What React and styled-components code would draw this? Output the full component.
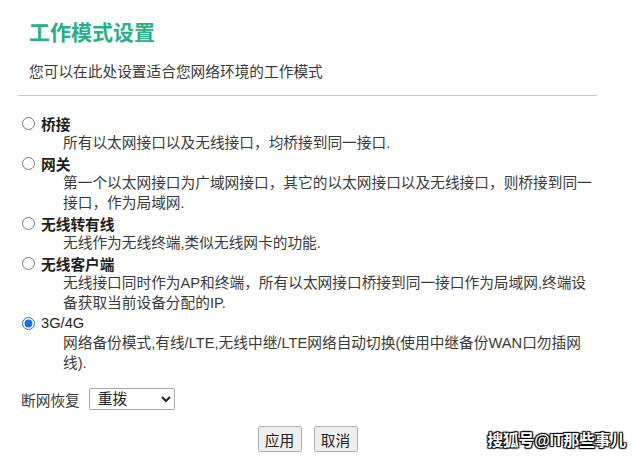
import React, { useState } from 'react'
import styled, { createGlobalStyle } from 'styled-components'

const GlobalStyle = createGlobalStyle`
  html, body {
    margin: 0;
    padding: 0;
    background: #ffffff;
  }
  body {
    font-family: "Liberation Sans", "Noto Sans CJK SC", sans-serif;
    color: #333;
  }
`

const modes = [
  { id: 'bridge', label: '桥接', desc: '所有以太网接口以及无线接口，均桥接到同一接口.' },
  { id: 'gateway', label: '网关', desc: '第一个以太网接口为广域网接口，其它的以太网接口以及无线接口，则桥接到同一接口，作为局域网.' },
  { id: 'wisp', label: '无线转有线', desc: '无线作为无线终端,类似无线网卡的功能.' },
  { id: 'client', label: '无线客户端', desc: '无线接口同时作为AP和终端，所有以太网接口桥接到同一接口作为局域网,终端设备获取当前设备分配的IP.' },
  { id: 'lte', label: '3G/4G', desc: '网络备份模式,有线/LTE,无线中继/LTE网络自动切换(使用中继备份WAN口勿插网线).' },
]

export default function App() {
  const [mode, setMode] = useState('lte')
  return (
    <Page>
      <GlobalStyle />
      <Panel>
        <Title>工作模式设置</Title>
        <Subtitle>您可以在此处设置适合您网络环境的工作模式</Subtitle>
        <Divider />
        <ModeList>
          {modes.map(m => (
            <Mode key={m.id}>
              <ModeLabel>
                <Radio type='radio' name='mode' checked={mode === m.id} onChange={() => setMode(m.id)} />
                <LabelText latin={m.id === 'lte'}>{m.label}</LabelText>
              </ModeLabel>
              <Desc>{m.desc}</Desc>
            </Mode>
          ))}
        </ModeList>
        <FieldRow>
          <FieldName>断网恢复</FieldName>
          <Select defaultValue='redial'>
            <option value='redial'>重拨</option>
            <option value='reboot'>重启</option>
          </Select>
        </FieldRow>
        <Actions>
          <Button>应用</Button>
          <Button>取消</Button>
        </Actions>
      </Panel>
      <Watermark>搜狐号@IT那些事儿</Watermark>
    </Page>
  )
}

const Page = styled.div`
width:640px;
height:468px;
position:relative;
overflow:hidden;
`
const Panel = styled.div`
width:579px;
margin-left:18px;
padding-top:19px;
display:flex;
flex-direction:column;
`
const Title = styled.h1`
margin:0 0 0 11px;
font-size:21px;
line-height:28px;
font-weight:bold;
color:#27b087;
`
const Subtitle = styled.div`
margin:15px 0 0 11px;
font-size:14.7px;
line-height:20px;
color:#3a3a3a;
`
const Divider = styled.div`
margin-top:13px;
height:1px;
background:#c9c9c9;
`
const ModeList = styled.div`
margin-top:17px;
display:flex;
flex-direction:column;
`
const Mode = styled.div`
display:flex;
flex-direction:column;
`
const ModeLabel = styled.label`
display:flex;
align-items:center;
height:20px;
cursor:pointer;
`
const Radio = styled.input`
width:13px;
height:13px;
margin:0 6px 0 4px;
accent-color:#1a6fe3;
`
const LabelText = styled.span`
font-size:14.7px;
font-weight:${props => props.latin ? 'normal' : 'bold'};
color:#1e1e1e;
`
const Desc = styled.div`
box-sizing:border-box;
padding-left:45px;
width:580px;
font-size:14.7px;
line-height:20px;
color:#3a3a3a;
`
const FieldRow = styled.div`
margin-top:15px;
display:flex;
align-items:center;
gap:9px;
padding-left:3px;
`
const FieldName = styled.span`
font-size:14.7px;
color:#3a3a3a;
`
const Select = styled.select`
width:86px;
height:22px;
font-family:inherit;
font-size:14.7px;
color:#222;
padding:0 0 0 4px;
border:1px solid #a8a8a8;
border-radius:2px;
background:#fff;
`
const Actions = styled.div`
margin-top:16px;
display:flex;
justify-content:center;
gap:12px;
`
const Button = styled.button`
width:44px;
height:26px;
padding:0;
font-family:inherit;
font-size:14.7px;
color:#222;
background:#efefef;
border:1px solid #b3b3b3;
border-radius:2px;
cursor:pointer;
`
const Watermark = styled.div`
position:absolute;
right:14px;
bottom:17px;
font-size:16px;
font-weight:bold;
color:#ffffff;
letter-spacing:-0.3px;
text-shadow:0 0 1px #000, 1px 1px 1px #000, -1px -1px 1px #000, 1px -1px 1px #000, -1px 1px 1px #000;
`
